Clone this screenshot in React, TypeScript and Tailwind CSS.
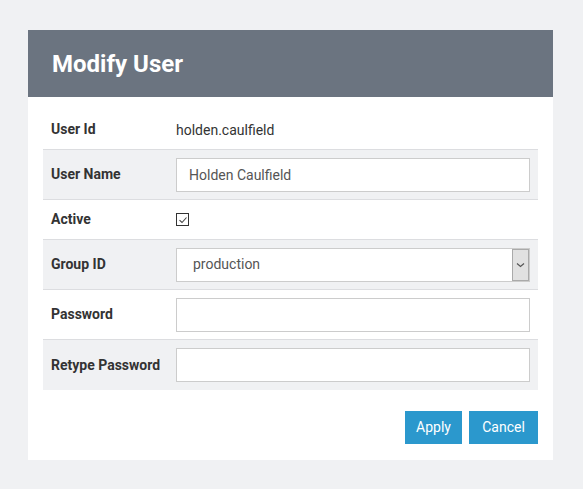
import React from 'react';

const labelCls = 'w-[133px] shrink-0 pl-2 text-[14px] font-bold text-[#333]';
const inputCls = 'h-[34px] flex-1 border border-[#ccc] bg-white px-3 text-[14px] text-[#555] outline-none';

const Row: React.FC<{ label: string; shaded?: boolean; last?: boolean; tall?: boolean; children: React.ReactNode }> = ({ label, shaded, last, tall, children }) => (
  <div
    className={`flex items-center pr-[8px] ${tall ? 'h-[50px]' : 'h-[40px]'} ${shaded ? 'bg-[#f0f1f3]' : 'bg-white'} ${last ? '' : 'border-b border-[#dcdde0]'}`}
  >
    <div className={labelCls}>{label}</div>
    {children}
  </div>
);

export default function App() {
  return (
    <div className="min-h-screen bg-[#f0f1f3] pt-[30px] pl-[28px]" style={{ fontFamily: 'Roboto, "Liberation Sans", sans-serif' }}>
      <div className="w-[525px] bg-white">
        <div className="flex h-[67px] items-center bg-[#6b7480] px-6">
          <h1 className="text-[24px] font-bold text-white">Modify User</h1>
        </div>
        <div className="px-[15px] pt-[13px] pb-[16px]">
          <div>
            <Row label="User Id">
              <span className="pt-px text-[14px] text-[#333]">holden.caulfield</span>
            </Row>
            <Row label="User Name" shaded tall>
              <input className={inputCls} defaultValue="Holden Caulfield" />
            </Row>
            <Row label="Active">
              <span className="flex h-[13px] w-[13px] items-center justify-center border border-[#333] bg-white">
                <svg width="10" height="10" viewBox="0 0 10 10" fill="none">
                  <path d="M1.5 5.2 L4 7.5 L8.5 2.5" stroke="#444" strokeWidth="1.1" />
                </svg>
              </span>
            </Row>
            <Row label="Group ID" shaded tall>
              <div className="flex h-[34px] flex-1 items-center border border-[#ccc] bg-white">
                <span className="flex-1 pl-4 text-[14px] text-[#555]">production</span>
                <span className="flex h-full w-[17px] items-center justify-center border border-[#aaa] bg-[#e1e1e1]">
                  <svg width="9" height="6" viewBox="0 0 9 6" fill="none">
                    <path d="M1 1.5 L4.5 4.5 L8 1.5" stroke="#555" strokeWidth="1.2" />
                  </svg>
                </span>
              </div>
            </Row>
            <Row label="Password" tall>
              <input type="password" className={inputCls} />
            </Row>
            <Row label="Retype Password" shaded tall last>
              <input type="password" className={inputCls} />
            </Row>
          </div>
          <div className="mt-[21px] flex justify-end gap-[7px]">
            <button className="h-[33px] w-[57px] bg-[#2b98cd] text-[14px] text-white">Apply</button>
            <button className="h-[33px] w-[69px] bg-[#2b98cd] text-[14px] text-white">Cancel</button>
          </div>
        </div>
      </div>
    </div>
  );
}
